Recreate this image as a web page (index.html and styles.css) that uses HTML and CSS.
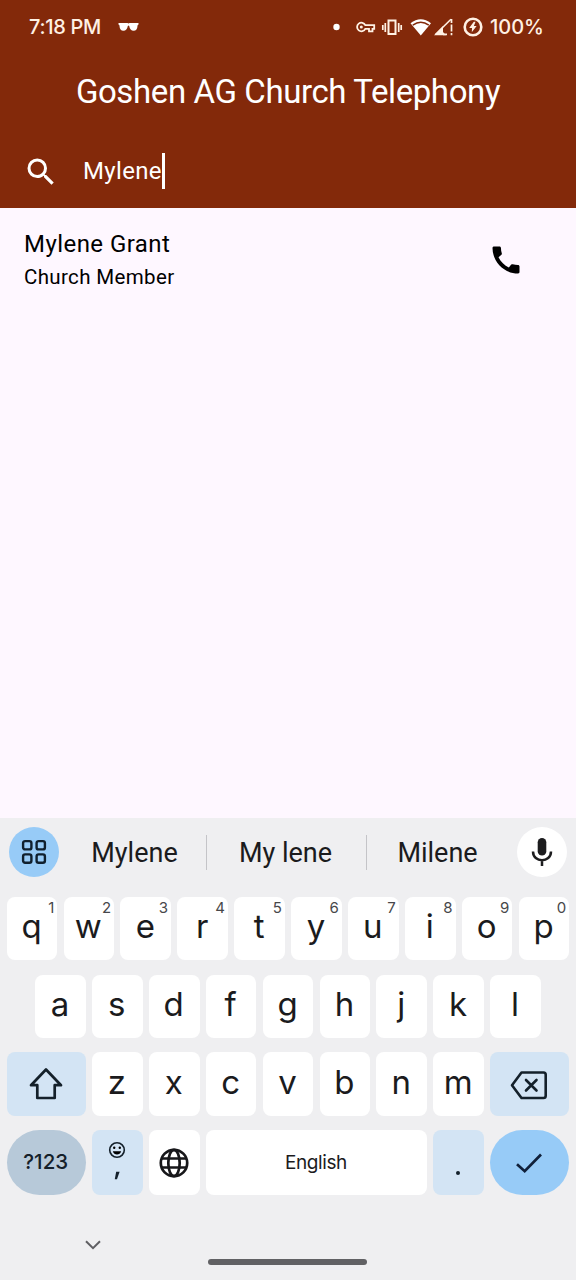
FILE: index.html
```html
<!DOCTYPE html>
<html lang="en">
<head>
  <meta charset="UTF-8">
  <title>Goshen AG Church Telephony</title>
  <link rel="stylesheet" href="styles.css">
</head>
<body>
  <header class="app-header">
    <div class="status-bar">
      <span class="time">7:18 PM</span>
      <svg class="glasses" width="21" height="10" viewBox="0 0 21 10" fill="#fff"><path d="M.5 1H9.500Q10.500 1.800 11.500 1H20.500V2.600L19.600 3.200Q19.300 8.800 15.600 8.800Q12 8.800 11.200 4Q10.500 3.200 9.800 4Q9 8.800 5.400 8.800Q1.700 8.800 1.400 3.200L.5 2.600Z"/></svg>
      <div class="status-icons">
        <svg width="130" height="24" viewBox="0 0 130 24" fill="none" stroke="#fff1e4">
          <circle cx="4.500" cy="12" r="3.200" fill="#fff" stroke="none"/>
          <path d="M33.300 10.200H42.200V13.800H40.500V16.300H37V13.800H33.300A4.300 4.300 0 1 1 33.300 10.200Z" stroke-width="1.800"/>
          <circle cx="29.300" cy="12" r="1.500" fill="#fff1e4" stroke="none"/>
          <rect x="56.500" y="5.500" width="7" height="13.500" stroke-width="2"/>
          <path d="M53.300 8v9M50.800 10v5M66.700 8v9M69.200 10v5" stroke-width="1.700"/>
          <path d="M78.500 8.300Q88.800 0 99 8.300L88.800 20.500Z" fill="#fff" stroke="none"/>
          <path d="M80.800 10.200Q88.800 4.500 96.800 10.200" stroke="#83290a" stroke-width="1.500"/>
          <path d="M103.500 19.500L119 4.200" stroke-width="1.600"/>
          <path d="M102 20.300L111 11V17L114 20.300Z" fill="#fff1e4" stroke="none"/>
          <path d="M111 19.300h4M119.500 4v4M119.500 9.500v7M119.500 18v2.200" stroke-width="1.700"/>
        </svg>
        <svg class="battery" width="20" height="20" viewBox="0 0 20 20"><circle cx="10" cy="10" r="8.300" fill="none" stroke="#fff1e4" stroke-width="2.600"/><path d="M10.800 4.800L6.200 10.900H9L8.800 15.200L13.600 9H10.900L12.500 4.800Z" fill="#fff1e4"/></svg>
        <span class="percent">100%</span>
      </div>
    </div>
    <h1 class="title">Goshen AG Church Telephony</h1>
    <div class="search">
      <svg width="36" height="36" viewBox="0 0 24 24" fill="#fff"><path d="M15.500 14h-.79l-.28-.27A6.470 6.470 0 0 0 16 9.500 6.500 6.500 0 1 0 9.500 16c1.610 0 3.090-.59 4.230-1.570l.27.28v.79l5 4.990L20.490 19zM9.500 14A4.500 4.500 0 1 1 9.500 5a4.500 4.500 0 0 1 0 9z"/></svg>
      <span class="query">Mylene</span><span class="caret"></span>
    </div>
  </header>

  <main class="results">
    <div class="contact">
      <div class="contact-text">
        <div class="name">Mylene Grant</div>
        <div class="role">Church Member</div>
      </div>
      <svg width="36" height="36" viewBox="0 0 24 24"><path d="M20.010 15.380c-1.230 0-2.420-.2-3.530-.56a.977.977 0 0 0-1.010.24l-1.570 1.970c-2.830-1.350-5.480-3.900-6.890-6.830l1.950-1.660c.27-.28.350-.67.240-1.020-.37-1.110-.56-2.300-.56-3.530 0-.54-.45-.99-.99-.99H4.190C3.650 3 3 3.240 3 3.990 3 13.280 10.730 21 20.010 21c.71 0 .99-.63.990-1.180v-3.450c0-.54-.45-.99-.99-.99z"/></svg>
    </div>
  </main>

  <section class="keyboard">
    <div class="suggestions">
      <span class="round apps"><svg width="26" height="26" viewBox="0 0 26 26" fill="none" stroke="#10202e" stroke-width="2.400"><rect x="2.100" y="2.100" width="8.300" height="8.300" rx="2"/><rect x="15.600" y="2.100" width="8.300" height="8.300" rx="2"/><rect x="2.100" y="15.400" width="8.300" height="8.300" rx="2"/><rect x="15.600" y="15.400" width="8.300" height="8.300" rx="2"/></svg></span>
      <span class="word first">Mylene</span>
      <span class="word middle">My lene</span>
      <span class="word last">Milene</span>
      <span class="round mic"><svg width="24" height="30" viewBox="0 0 24 30"><rect x="7.700" y="1" width="8.600" height="17.500" rx="4.300" fill="#1c1c1e"/><path d="M3 14.500C3 26 21 26 21 14.500M12 23v6" fill="none" stroke="#1c1c1e" stroke-width="2.500"/></svg></span>
    </div>

    <div class="row">
      <span class="key">q<sup>1</sup></span>
      <span class="key">w<sup>2</sup></span>
      <span class="key">e<sup>3</sup></span>
      <span class="key">r<sup>4</sup></span>
      <span class="key">t<sup>5</sup></span>
      <span class="key">y<sup>6</sup></span>
      <span class="key">u<sup>7</sup></span>
      <span class="key">i<sup>8</sup></span>
      <span class="key">o<sup>9</sup></span>
      <span class="key">p<sup>0</sup></span>
    </div>
    <div class="row home">
      <span class="key">a</span>
      <span class="key">s</span>
      <span class="key">d</span>
      <span class="key">f</span>
      <span class="key">g</span>
      <span class="key">h</span>
      <span class="key">j</span>
      <span class="key">k</span>
      <span class="key">l</span>
    </div>
    <div class="row">
      <span class="key wide tint"><svg width="34" height="34" viewBox="0 0 34 34" fill="none" stroke="#14202a" stroke-width="2.700" stroke-linejoin="round"><path d="M17 2.500L32 18.200H25.700V31H8.300V18.200H2Z"/></svg></span>
      <span class="key">z</span>
      <span class="key">x</span>
      <span class="key">c</span>
      <span class="key">v</span>
      <span class="key">b</span>
      <span class="key">n</span>
      <span class="key">m</span>
      <span class="key wide tint"><svg width="38" height="32" viewBox="0 0 38 32" fill="none" stroke="#14202a" stroke-width="2.600" stroke-linejoin="round" stroke-linecap="round"><path d="M11.500 4.500H33.500Q35.700 4.500 35.700 6.700V27.800Q35.700 30 33.500 30H11.500L2 17.200Z"/><path d="M16 12l10.500 10.500M26.500 12L16 22.500"/></svg></span>
    </div>
    <div class="row bottom">
      <span class="key wide symbols">?123</span>
      <span class="key tint comma">
        <svg width="18" height="18" viewBox="0 0 18 18"><circle cx="9" cy="9" r="7.300" fill="none" stroke="#14202a" stroke-width="1.600"/><circle cx="6.200" cy="6.800" r="1.200"/><circle cx="11.800" cy="6.800" r="1.200"/><path d="M4.800 10.300H13.200Q12 13.500 9 13.500T4.800 10.300Z"/></svg>
        <svg width="6" height="9" viewBox="0 0 6 9"><path d="M2.200 .8H5.600L3 8.200H.8Z" fill="#14202a"/></svg>
      </span>
      <span class="key"><svg width="30" height="30" viewBox="0 0 30 30" fill="none" stroke="#17171a" stroke-width="2.700"><circle cx="15" cy="15" r="13.200"/><ellipse cx="15" cy="15" rx="5.700" ry="13.200"/><path d="M3 10.500H27M3 19.500H27"/></svg></span>
      <span class="key space">English</span>
      <span class="key tint period"><i class="dot"></i></span>
      <span class="key wide enter"><svg width="28" height="22" viewBox="0 0 28 22" fill="none" stroke="#10203a" stroke-width="2.700"><path d="M2 12.200L9.700 19.200L26 2.500"/></svg></span>
    </div>

    <div class="nav-bar">
      <svg width="16" height="10" viewBox="0 0 16 10" fill="none" stroke="#5f5f63" stroke-width="2"><path d="M1 1.300L8 8.200L15 1.300"/></svg>
      <span class="handle"></span>
    </div>
  </section>
</body>
</html>
```
FILE: styles.css
```css
* { box-sizing: border-box; }
body {
  margin: 0;
  height: 1280px;
  display: flex;
  flex-direction: column;
  background: #fef7ff;
  font-family: Roboto, "Liberation Sans", sans-serif;
  color: #000;
  overflow: hidden;
}
svg { display: block; flex: none; }

.app-header {
  height: 208px;
  background: #83290a;
  color: #fff;
}
.status-bar {
  height: 54px;
  padding: 0 33px 0 29px;
  display: flex;
  align-items: center;
  font-family: Inter, sans-serif;
  font-size: 20px;
  font-weight: 500;
  color: #fff1e4;
}
.time {
  width: 72px;
  white-space: nowrap;
  letter-spacing: -0.3px;
}
.glasses { margin-left: 17px; }
.status-icons {
  margin-left: auto;
  display: flex;
  align-items: center;
}
.battery { margin: 0 7px 0 1px; }
.percent { width: 53px; white-space: nowrap; }
.title {
  margin: 0;
  height: 74px;
  padding-top: 1px;
  line-height: 74px;
  text-align: center;
  font-size: 33px;
  font-weight: 400;
  letter-spacing: -0.4px;
}
.search {
  height: 80px;
  padding: 7px 0 0 23px;
  display: flex;
  align-items: center;
}
.query {
  margin-left: 24px;
  padding-bottom: 2px;
  font-size: 24px;
  letter-spacing: 0.35px;
}
.caret {
  width: 3px;
  height: 36px;
  margin-bottom: 1px;
  background: #fff;
}

.results {
  height: 610px;
  padding-top: 22px;
}
.contact {
  display: flex;
  justify-content: space-between;
  align-items: center;
  padding: 0 52px 0 24px;
}
.name {
  font-size: 24px;
  line-height: 28px;
  letter-spacing: 0.45px;
}
.role {
  margin-top: 6px;
  font-size: 20.500px;
  line-height: 26px;
  letter-spacing: 0.35px;
}

.keyboard {
  flex: 1;
  background: #efeff1;
  color: #1b1b1d;
  font-family: Inter, sans-serif;
}
.suggestions {
  height: 79px;
  padding: 0 9px 10px;
  display: flex;
  align-items: center;
  font-family: Roboto, sans-serif;
  font-size: 27px;
}
.round {
  width: 50px;
  height: 50px;
  border-radius: 50%;
  display: flex;
  align-items: center;
  justify-content: center;
}
.apps { background: #97cbf7; }
.mic { background: #fff; }
.word {
  height: 35px;
  line-height: 37px;
  text-align: center;
  white-space: nowrap;
}
.first { width: 147px; padding-left: 4px; }
.middle {
  width: 161px;
  padding-right: 2px;
  border-left: 1px solid #c4c4c8;
  border-right: 1px solid #c4c4c8;
}
.last { width: 150px; padding-right: 9px; }

.row {
  height: 63.500px;
  margin-bottom: 14.200px;
  display: flex;
  justify-content: center;
  gap: 6.300px;
}
.key {
  position: relative;
  width: 50.600px;
  flex: none;
  border-radius: 8px;
  background: #fff;
  display: flex;
  align-items: center;
  justify-content: center;
  font-size: 33px;
  line-height: 1;
  padding: 0 1px 4px 0;
}
.key sup {
  position: absolute;
  top: 3px;
  right: 3px;
  font-size: 15px;
  line-height: 16px;
  color: #47474a;
}
.wide { width: 79px; padding-bottom: 0; }
.tint { background: #d3e4f4; }
.bottom { height: 65px; margin: 0; }
.bottom .key { padding-bottom: 0; }
.bottom .symbols {
  border-radius: 33px;
  background: #b7c9d9;
  color: #14202a;
  font-size: 20.500px;
  font-weight: 500;
}
.bottom .comma {
  flex-direction: column;
  justify-content: flex-start;
  padding-top: 11px;
  gap: 12px;
}
.bottom .space {
  width: 221.300px;
  font-size: 19px;
  letter-spacing: -0.4px;
}
.dot {
  width: 4px;
  height: 4px;
  margin-top: 21px;
  border-radius: 50%;
  background: #14202a;
}
.enter { border-radius: 33px; background: #97cbf7; }
.nav-bar {
  height: 85px;
  padding: 45px 0 0 85px;
  display: flex;
}
.handle {
  width: 159px;
  height: 6px;
  margin: 19px 0 0 107px;
  border-radius: 3px;
  background: #616164;
}
```
